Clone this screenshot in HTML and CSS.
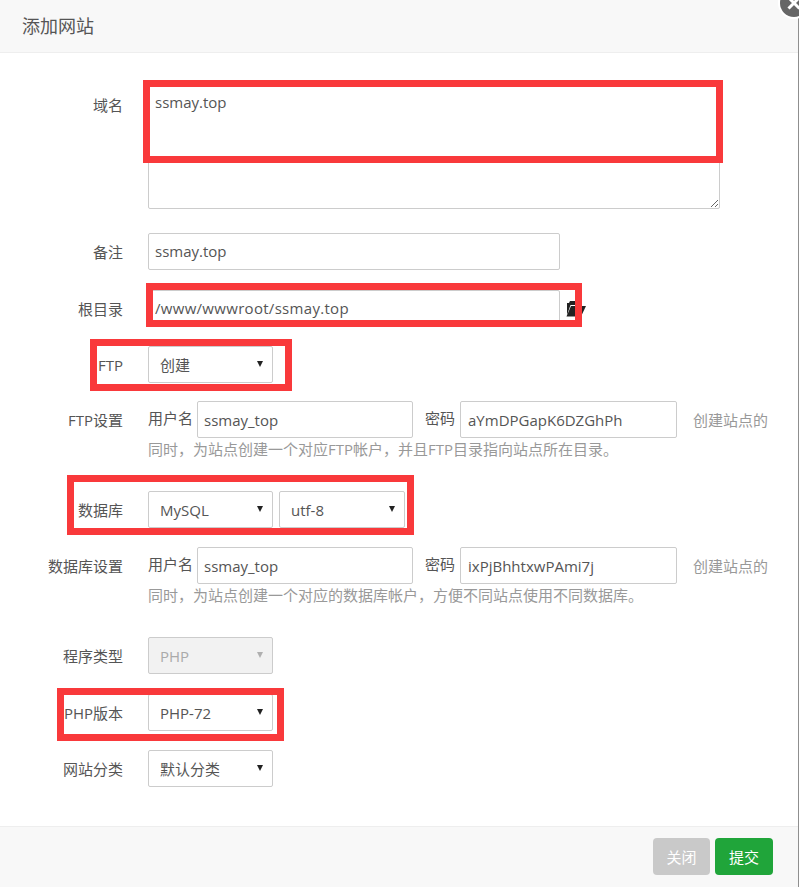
FILE: index.html
```html
<!DOCTYPE html>
<html lang="zh-CN">
<head>
    <meta charset="UTF-8">
    <meta name="viewport" content="width=device-width, initial-scale=1.0">
    <title>添加网站</title>
    <link rel="stylesheet" href="styles.css">
</head>
<body>
    <div class="dialog">
        <div class="dialog_title">添加网站</div>
        <div class="dialog_close">
            <svg width="28" height="28" viewBox="0 0 28 28">
                <path d="M8.5 8.5 L19.5 19.5 M19.5 8.5 L8.5 19.5" stroke="#fff" stroke-width="3"/>
            </svg>
        </div>

        <form class="dialog_body">
            <div class="row gap_24">
                <label class="row_label">域名</label>
                <textarea class="domain_input">ssmay.top</textarea>
            </div>
            <div class="row gap_20">
                <label class="row_label">备注</label>
                <input class="text_input wide" type="text" value="ssmay.top">
            </div>
            <div class="row">
                <label class="row_label">根目录</label>
                <input class="text_input wide path" type="text" value="/www/wwwroot/ssmay.top">
                <svg class="folder_icon" width="20" height="17" viewBox="0 0 20 17">
                    <path d="M1 15 V3 H3 L4 1 H9 L10 3 H15 V5 H4.5 Z" fill="#222"/>
                    <path d="M5 6 H20 L15 16.5 H0.5 Z" fill="#222"/>
                </svg>
            </div>
            <div class="row gap_18">
                <label class="row_label">FTP</label>
                <div class="select_box"><select class="select_input"><option>创建</option></select></div>
            </div>
            <div class="row gap_30">
                <label class="row_label">FTP设置</label>
                <div class="inline_group">
                    <span class="inline_label">用户名</span><input class="text_input short" type="text" value="ssmay_top"><span class="inline_label second">密码</span><input class="text_input short pass" type="text" value="aYmDPGapK6DZGhPh"><span class="hint"><span class="hint_lead">创建站点的</span>同时&#65292;为站点创建一个对应FTP帐户&#65292;并且FTP目录指向站点所在目录。</span>
                </div>
            </div>
            <div class="row">
                <label class="row_label">数据库</label>
                <div class="select_box"><select class="select_input"><option>MySQL</option></select></div>
                <div class="select_box charset"><select class="select_input"><option>utf-8</option></select></div>
            </div>
            <div class="row gap_30">
                <label class="row_label">数据库设置</label>
                <div class="inline_group">
                    <span class="inline_label">用户名</span><input class="text_input short" type="text" value="ssmay_top"><span class="inline_label second">密码</span><input class="text_input short pass" type="text" value="ixPjBhhtxwPAmi7j"><span class="hint"><span class="hint_lead">创建站点的</span>同时&#65292;为站点创建一个对应的数据库帐户&#65292;方便不同站点使用不同数据库。</span>
                </div>
            </div>
            <div class="row gap_20">
                <label class="row_label">程序类型</label>
                <div class="select_box disabled"><select class="select_input" disabled><option>PHP</option></select></div>
            </div>
            <div class="row">
                <label class="row_label">PHP版本</label>
                <div class="select_box"><select class="select_input"><option>PHP-72</option></select></div>
            </div>
            <div class="row">
                <label class="row_label">网站分类</label>
                <div class="select_box"><select class="select_input"><option>默认分类</option></select></div>
            </div>
        </form>

        <div class="dialog_footer">
            <button class="btn btn_close" type="button">关闭</button>
            <button class="btn btn_submit" type="button">提交</button>
        </div>

        <!-- red boxes drawn on top of the screenshot -->
        <div class="mark mark_domain"></div>
        <div class="mark mark_root"></div>
        <div class="mark mark_ftp"></div>
        <div class="mark mark_db"></div>
        <div class="mark mark_php"></div>
    </div>
</body>
</html>
```

FILE: styles.css
```css
html, body {
    margin: 0;
    padding: 0;
    height: 100%;
    overflow: hidden;
    background-color: #ffffff;
}
body, input, select, textarea, button {
    font-family: "Open Sans", "Noto Sans CJK SC", sans-serif;
    font-size: 15px;
    color: #555555;
}
.dialog {
    position: relative;
    display: flex;
    flex-direction: column;
    box-sizing: border-box;
    width: 799px;
    height: 887px;
    border-right: 1px solid #8f8f8f;
}
.dialog_title {
    height: 52px;
    line-height: 52px;
    padding-left: 22px;
    font-size: 18px;
    background-color: #f8f8f8;
    border-bottom: 1px solid #eeeeee;
}
.dialog_close {
    position: absolute;
    top: -11px;
    right: -10px;
    width: 28px;
    height: 28px;
    border-radius: 50%;
    background-color: #666666;
    box-shadow: 0 0 0 2px #ffffff;
}
.dialog_close svg {
    display: block;
}
.dialog_body {
    flex: 1;
    padding-top: 33px;
}
.row {
    display: flex;
    align-items: flex-start;
    margin-bottom: 19px;
}
.gap_18 { margin-bottom: 18px; }
.gap_20 { margin-bottom: 20px; }
.gap_24 { margin-bottom: 24px; }
.gap_30 { margin-bottom: 30px; }
.row_label {
    flex: none;
    box-sizing: border-box;
    width: 123px;
    height: 37px;
    margin-right: 25px;
    padding-top: 1px;
    line-height: 37px;
    text-align: right;
}
.domain_input {
    box-sizing: border-box;
    width: 572px;
    height: 123px;
    padding: 5px 6px;
    line-height: 20px;
    border: 1px solid #cccccc;
    border-radius: 2px;
    outline: none;
}
.text_input {
    box-sizing: border-box;
    height: 37px;
    padding: 0 6px 2px;
    border: 1px solid #cccccc;
    border-radius: 2px;
    outline: none;
    vertical-align: middle;
}
.wide {
    width: 412px;
}
.path {
    letter-spacing: 0.3px;
}
.short {
    width: 216px;
    padding-bottom: 0;
}
.pass {
    width: 217px;
    padding-left: 7px;
    margin-right: 16px;
}
.folder_icon {
    flex: none;
    margin: 10px 0 0 6px;
}
.select_box {
    position: relative;
    width: 125px;
    height: 37px;
}
.select_box::after {
    content: "";
    position: absolute;
    top: 15px;
    right: 10px;
    border-left: 3.5px solid transparent;
    border-right: 3.5px solid transparent;
    border-top: 6px solid #222222;
}
.select_box.disabled::after {
    border-top-color: #b0b0b0;
}
.select_box.charset {
    width: 126px;
    margin-left: 6px;
}
.select_input {
    display: block;
    box-sizing: border-box;
    width: 100%;
    height: 37px;
    padding: 0 20px 0 11px;
    border: 1px solid #cccccc;
    border-radius: 2px;
    background-color: #ffffff;
    appearance: none;
    outline: none;
    opacity: 1;
}
.select_input:disabled {
    background-color: #f2f2f2;
    color: #aaaaaa;
}
.inline_group {
    width: 627px;
    line-height: 23px;
}
.inline_label {
    margin-right: 4px;
}
.inline_label.second {
    margin-left: 12px;
    margin-right: 5px;
}
.hint {
    color: #999999;
}
.hint_lead {
    vertical-align: -2px;
}
.dialog_footer {
    display: flex;
    justify-content: flex-end;
    gap: 5px;
    height: 61px;
    box-sizing: border-box;
    padding: 11px 25px 0 0;
    background-color: #f8f8f8;
    border-top: 1px solid #eeeeee;
}
.btn {
    width: 58px;
    height: 37px;
    padding: 0;
    border: none;
    border-radius: 4px;
    color: #ffffff;
}
.btn_close {
    width: 57px;
    background-color: #c9c9c9;
}
.btn_submit {
    background-color: #20a53a;
}
.mark {
    position: absolute;
    box-sizing: border-box;
    border: 7px solid #f9393b;
}
.mark_domain {
    left: 143px;
    top: 80px;
    width: 580px;
    height: 83px;
}
.mark_root {
    left: 146px;
    top: 283px;
    width: 436px;
    height: 44px;
}
.mark_ftp {
    left: 90px;
    top: 339px;
    width: 202px;
    height: 52px;
}
.mark_db {
    left: 67px;
    top: 475px;
    width: 347px;
    height: 60px;
}
.mark_php {
    left: 57px;
    top: 688px;
    width: 227px;
    height: 53px;
}
```
